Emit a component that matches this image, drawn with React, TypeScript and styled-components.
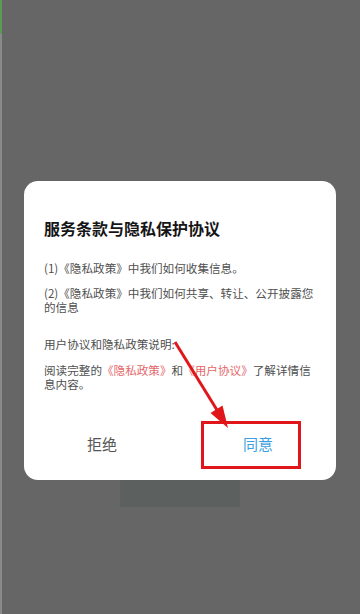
import React, { ReactElement } from 'react';
import styled, { createGlobalStyle } from 'styled-components';

interface ParagraphProps {
  gap?: string;
}

interface ActionProps {
  primary?: boolean;
}

const GlobalStyle = createGlobalStyle`
  html, body {
    margin: 0;
    padding: 0;
  }
  body {
    font-family: 'Noto Sans CJK SC', 'Noto Sans', sans-serif;
  }
`;

const Screen = styled.main`
  min-height: 614px;
  display: flex;
  flex-direction: column;
  align-items: center;
  background:
    linear-gradient(#5b9a55, #5b9a55) 0 0 / 2px 34px no-repeat,
    linear-gradient(#8a8a8a, #8a8a8a) 0 0 / 2px 100% no-repeat,
    #666666;
`;

const Dialog = styled.section`
  position: relative;
  box-sizing: border-box;
  width: 312px;
  margin-top: 181px;
  padding: 36px 16px 13px 20px;
  background-color: #fff;
  border-radius: 14px;
`;

const Title = styled.h2`
  margin: 0;
  font-size: 16px;
  font-weight: 700;
  line-height: 22px;
  color: #151515;
`;

const Paragraph = styled.p<ParagraphProps>`
  margin: ${({ gap = '0' }) => gap} 0 0;
  font-size: 11.6px;
  line-height: 14px;
  color: #4f4f4f;
`;

const PolicyLink = styled.span`
  color: #e4676a;
`;

const Actions = styled.div`
  display: grid;
  grid-template-columns: 1fr 1fr;
  margin: 28px -16px 0 -20px;
`;

const Action = styled.button<ActionProps>`
  height: 48px;
  border: 0;
  padding: 0;
  background: none;
  font-family: inherit;
  font-size: 15px;
  color: ${({ primary }) => (primary ? '#3c9fe2' : '#555')};
`;

const Highlight = styled.div`
  position: absolute;
  left: 177px;
  top: 240px;
  width: 100px;
  height: 48px;
  box-sizing: border-box;
  border: 3px solid #e1161a;
  pointer-events: none;
`;

const Pointer = styled.svg`
  position: absolute;
  inset: 0;
  width: 312px;
  height: 299px;
  pointer-events: none;
`;

const BackdropButton = styled.div`
  width: 120px;
  height: 27px;
  background-color: #5c6160;
`;

const App = (): ReactElement => (
  <>
    <GlobalStyle />
    <Screen>
      <Dialog>
        <Title>服务条款与隐私保护协议</Title>
        <Paragraph gap="22px">(1)《隐私政策》中我们如何收集信息。</Paragraph>
        <Paragraph gap="11px">(2)《隐私政策》中我们如何共享、转让、公开披露您的信息</Paragraph>
        <Paragraph gap="23px">用户协议和隐私政策说明:</Paragraph>
        <Paragraph gap="12px">
          阅读完整的<PolicyLink>《隐私政策》</PolicyLink>和<PolicyLink>《用户协议》</PolicyLink>了解详情信息内容。
        </Paragraph>
        <Actions>
          <Action>拒绝</Action>
          <Action primary>同意</Action>
        </Actions>
        <Highlight />
        <Pointer viewBox="0 0 312 299">
          <line x1="151" y1="161" x2="193" y2="229" stroke="#e1161a" strokeWidth="3" />
          <polygon points="204,247 186.5,232 198.5,224.6" fill="#e1161a" />
        </Pointer>
      </Dialog>
      <BackdropButton />
    </Screen>
  </>
);

export default App;
